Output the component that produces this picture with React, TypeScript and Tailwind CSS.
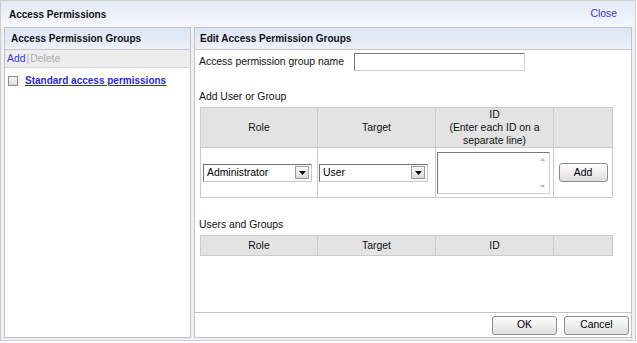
import React from "react";

function Select({ value, width }: { value: string; width: string }) {
  return (
    <div
      className={`flex h-[18px] ${width} items-center border border-t-[#707070] border-l-[#707070] border-r-[#c8c8c8] border-b-[#c8c8c8] bg-white`}
    >
      <span className="flex-1 pl-[3px] text-[10.4px] leading-[14px] text-black">{value}</span>
      <div className="mr-[2px] flex h-[13px] w-[14px] items-center justify-center border border-[#9c9c9c] bg-linear-to-b from-white to-[#d8d8d8]">
        <svg width="7" height="4" viewBox="0 0 7 4">
          <path d="M0 0 L7 0 L3.5 4 Z" fill="#000" />
        </svg>
      </div>
    </div>
  );
}

function Btn({ label, w }: { label: string; w: string }) {
  return (
    <div
      className={`flex h-[19px] ${w} items-center justify-center rounded-[3px] border border-[#8e8e8e] bg-linear-to-b from-[#ffffff] to-[#dedede] text-[10.4px] text-black`}
    >
      {label}
    </div>
  );
}

export default function App() {
  return (
    <div className="h-[343px] w-[637px] bg-white font-[family-name:'Liberation_Sans',Arial,sans-serif] text-[10.4px] text-[#111]">
      <div className="flex h-[341px] w-[636px] flex-col border border-[#cdcdcd] bg-[#eef0f5] pl-[3px] pr-[3px] pb-[2px]">
        {/* Title bar */}
        <div className="-mx-[3px] flex h-[26px] items-center justify-between bg-linear-to-b from-[#e3eaf7] to-[#f5f7fd] pl-[8px] pr-[18px]">
          <span className="text-[10px] font-bold text-[#111]">Access Permissions</span>
          <span className="text-[10.4px] text-[#3535c8]">Close</span>
        </div>
        {/* Body */}
        <div className="flex flex-1 gap-[3px]">
          {/* Left panel */}
          <div className="flex w-[187px] flex-col border border-[#c4c4c4] bg-white">
            <div className="flex h-[22px] items-center border-b border-[#c8c8c8] bg-linear-to-b from-[#dbe4f5] to-[#edf1fa] pl-[6px] text-[10px] font-bold text-[#111]">
              Access Permission Groups
            </div>
            <div className="flex h-[18px] items-center border-b border-[#d6d6d6] bg-[#ededed] pl-[2px] text-[10.4px]">
              <span className="text-[#3333d6]">Add</span>
              <span className="mx-[1px] text-[#b0b0b0]">|</span>
              <span className="text-[#aaaaaa]">Delete</span>
            </div>
            <div className="flex items-center pl-[3px] pt-[5px]">
              <div className="h-[10px] w-[10px] border border-[#8f8f8f] bg-linear-to-b from-[#f2f2f2] to-[#dcdcdc]" />
              <span className="ml-[7px] whitespace-nowrap text-[10px] font-bold text-[#2a2ad8] underline">Standard access permissions</span>
            </div>
          </div>
          {/* Right panel */}
          <div className="flex flex-1 flex-col border border-[#c4c4c4] bg-white">
            <div className="flex h-[22px] items-center border-b border-[#c8c8c8] bg-linear-to-b from-[#dbe4f5] to-[#edf1fa] pl-[5px] text-[10px] font-bold text-[#111]">
              Edit Access Permission Groups
            </div>
            <div className="flex flex-1 flex-col pl-[4px]">
              <div className="mt-[3px] flex h-[18px] items-center">
                <span className="text-[10.4px]">Access permission group name</span>
                <div className="ml-[10px] h-[18px] w-[171px] border border-t-[#7a7a7a] border-l-[#7a7a7a] border-r-[#d0d0d0] border-b-[#d0d0d0] bg-white" />
              </div>
              <div className="mt-[19px] text-[10.4px] leading-[14px]">Add User or Group</div>
              <table className="ml-[1px] mt-[3px] w-[412px] table-fixed border-collapse text-[10.4px]">
                <colgroup>
                  <col className="w-[117px]" />
                  <col className="w-[118px]" />
                  <col className="w-[118px]" />
                  <col className="w-[59px]" />
                </colgroup>
                <thead>
                  <tr className="h-[40px] bg-[#e3e3e3]">
                    <th className="border border-[#cbcbcb] font-normal">Role</th>
                    <th className="border border-[#cbcbcb] font-normal">Target</th>
                    <th className="border border-[#cbcbcb] font-normal leading-[13px]">
                      ID
                      <br />
                      (Enter each ID on a
                      <br />
                      separate line)
                    </th>
                    <th className="border border-[#cbcbcb]" />
                  </tr>
                </thead>
                <tbody>
                  <tr className="h-[50px] bg-white">
                    <td className="border border-[#cbcbcb] pl-[2px]">
                      <Select value="Administrator" width="w-[109px]" />
                    </td>
                    <td className="border border-[#cbcbcb] pl-[1px]">
                      <Select value="User" width="w-[109px]" />
                    </td>
                    <td className="border border-[#cbcbcb] pl-[1px]">
                      <div className="flex h-[42px] w-[113px] border border-t-[#7a7a7a] border-l-[#7a7a7a] border-r-[#d0d0d0] border-b-[#d0d0d0] bg-white">
                        <div className="flex-1" />
                        <div className="flex w-[14px] flex-col items-center justify-between py-[5px]">
                          <svg width="5" height="3" viewBox="0 0 5 3">
                            <path d="M0 3 L5 3 L2.5 0 Z" fill="#b8b8b8" />
                          </svg>
                          <svg width="5" height="3" viewBox="0 0 5 3">
                            <path d="M0 0 L5 0 L2.5 3 Z" fill="#b8b8b8" />
                          </svg>
                        </div>
                      </div>
                    </td>
                    <td className="border border-[#cbcbcb]">
                      <div className="flex justify-center">
                        <Btn label="Add" w="w-[49px]" />
                      </div>
                    </td>
                  </tr>
                </tbody>
              </table>
              <div className="mt-[20px] text-[10.4px] leading-[14px]">Users and Groups</div>
              <table className="ml-[1px] mt-[3px] w-[412px] table-fixed border-collapse text-[10.4px]">
                <colgroup>
                  <col className="w-[117px]" />
                  <col className="w-[118px]" />
                  <col className="w-[118px]" />
                  <col className="w-[59px]" />
                </colgroup>
                <thead>
                  <tr className="h-[20px] bg-[#e3e3e3]">
                    <th className="border border-[#cbcbcb] font-normal">Role</th>
                    <th className="border border-[#cbcbcb] font-normal">Target</th>
                    <th className="border border-[#cbcbcb] font-normal">ID</th>
                    <th className="border border-[#cbcbcb]" />
                  </tr>
                </thead>
              </table>
              <div className="flex-1" />
            </div>
            <div className="flex h-[25px] items-center justify-end gap-[7px] border-t border-[#c4c4c4] pr-[2px]">
              <Btn label="OK" w="w-[65px]" />
              <Btn label="Cancel" w="w-[65px]" />
            </div>
          </div>
        </div>
      </div>
    </div>
  );
}
